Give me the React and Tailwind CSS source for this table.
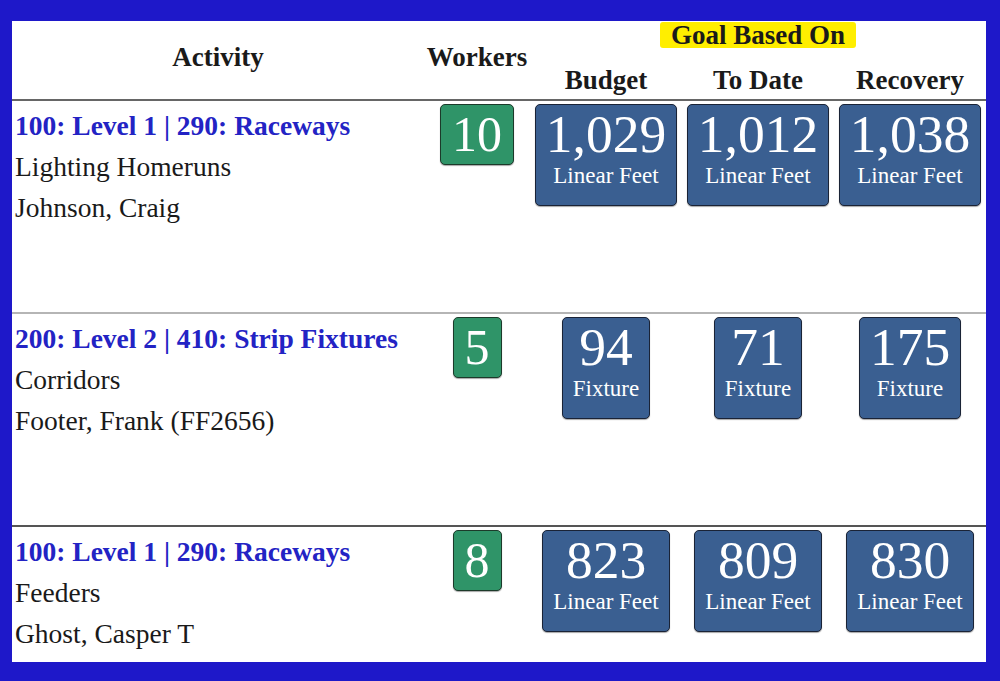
import React from 'react';

const rows = [
    {
        title: '100: Level 1 | 290: Raceways',
        desc: 'Lighting Homeruns',
        who: 'Johnson, Craig',
        workers: 10,
        unit: 'Linear Feet',
        goals: ['1,029', '1,012', '1,038'],
        line: 'border-[#b5b5b5]',
    },
    {
        title: '200: Level 2 | 410: Strip Fixtures',
        desc: 'Corridors',
        who: 'Footer, Frank (FF2656)',
        workers: 5,
        unit: 'Fixture',
        goals: ['94', '71', '175'],
        line: 'border-[#555555]',
    },
    {
        title: '100: Level 1 | 290: Raceways',
        desc: 'Feeders',
        who: 'Ghost, Casper T',
        workers: 8,
        unit: 'Linear Feet',
        goals: ['823', '809', '830'],
        line: 'border-[#555555]',
    },
];

const serif = { fontFamily: '"Liberation Serif", "Times New Roman", serif' };

const GoalBox = ({ value, unit }) => (
    <div className="rounded-[5px] border border-[#1a2336] bg-[#3a5f91] px-[10px] pb-[17px] text-center text-white shadow-[0_1px_1px_rgba(0,0,0,0.35)]">
        <div className="text-[53.5px] leading-[58px]">{value}</div>
        <div className="text-[23px] leading-[25px]">{unit}</div>
    </div>
);

const App = () => {
    return (
        <div className="w-[1000px] h-[681px] bg-[#1e18c9] pt-[21px] pl-[12px] pr-[14px] pb-[19px]" style={serif}>
            <div className="h-[641px] bg-white overflow-hidden text-[#1a1a1a]">
                <div className="grid grid-cols-[412px_106px_152px_152px_152px] grid-rows-[30px_48px] border-b-2 border-[#666666] text-[27px] font-bold">
                    <div className="row-span-2 flex items-center justify-center pb-[6px]">Activity</div>
                    <div className="row-span-2 flex items-center justify-center pb-[6px]">Workers</div>
                    <div className="col-span-3 flex justify-center items-start">
                        <span className="mt-[1px] px-[11px] leading-[26px] bg-[#ffee00] rounded-[3px]">Goal Based On</span>
                    </div>
                    <div className="flex items-end justify-center pb-[4px] leading-[30px]">Budget</div>
                    <div className="flex items-end justify-center pb-[4px] leading-[30px]">To Date</div>
                    <div className="flex items-end justify-center pb-[4px] leading-[30px]">Recovery</div>
                </div>

                {rows.map((r, i) => (
                    <div key={i} className={`grid grid-cols-[412px_106px_152px_152px_152px] h-[213px] border-b-2 ${r.line}`}>
                        <div className="pl-[3px] pt-[4px] text-[27.5px] leading-[41px]">
                            <div className="font-bold text-[#2323c4]">{r.title}</div>
                            <div>{r.desc}</div>
                            <div>{r.who}</div>
                        </div>
                        <div className="flex justify-center items-start pt-[3px]">
                            <div className="h-[61px] rounded-[5px] border border-[#1c3a2a] bg-[#2f9468] px-[11px] text-[50px] leading-[58px] text-white shadow-[0_1px_1px_rgba(0,0,0,0.35)]">
                                {r.workers}
                            </div>
                        </div>
                        {r.goals.map((g, j) => (
                            <div key={j} className="flex justify-center items-start pt-[3px]">
                                <GoalBox value={g} unit={r.unit} />
                            </div>
                        ))}
                    </div>
                ))}
            </div>
        </div>
    );
};

export default App;
